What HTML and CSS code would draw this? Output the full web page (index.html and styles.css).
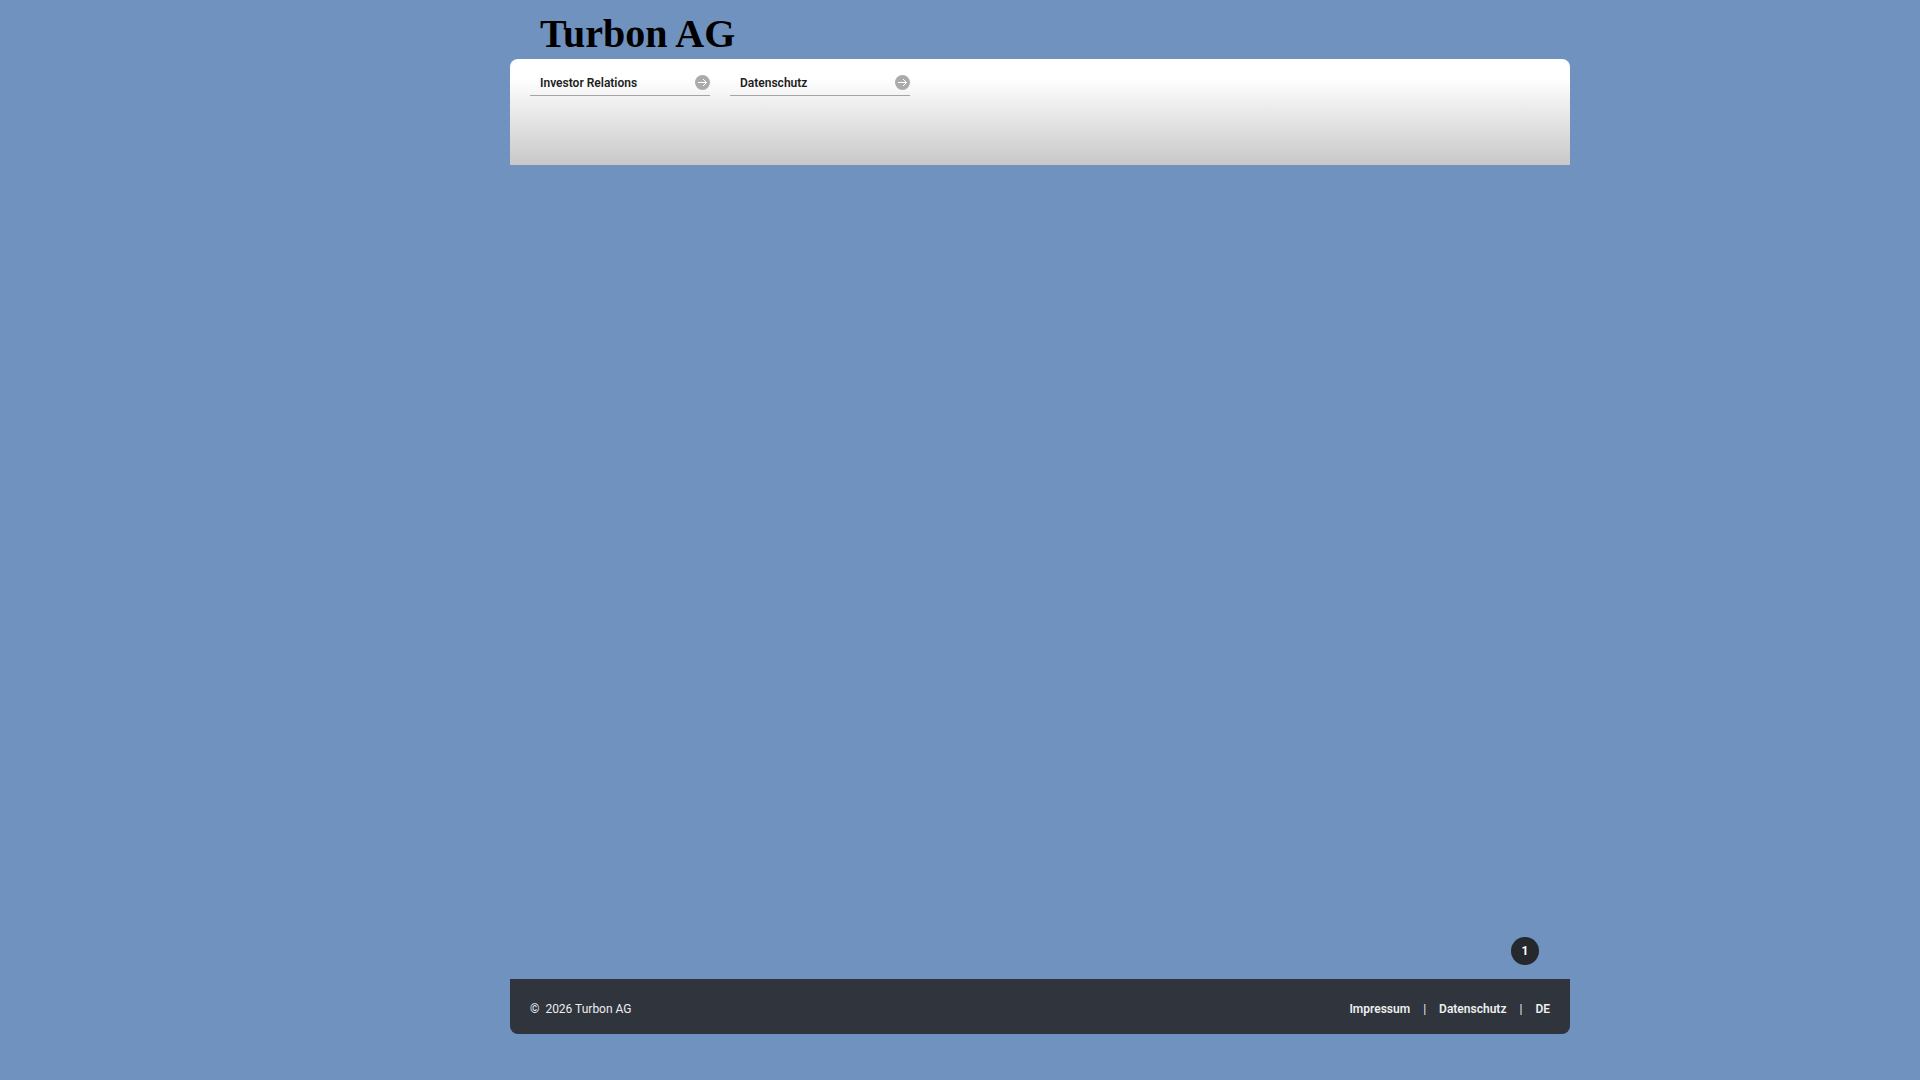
FILE: index.html
```html
<!DOCTYPE html>
<html lang="de">
<head>
<meta charset="utf-8">
<meta name="viewport" content="width=device-width, initial-scale=1">
<title>Turbon AG</title>
<link rel="stylesheet" href="styles.css">
</head>
<body>
<div class="page">
  <header>
    <a class="logo" href="#">Turbon AG</a>
    <nav class="menu" aria-label="Hauptmenü">
      <a class="menu-item" href="#">Investor Relations
        <svg class="arrow" viewBox="0 0 15 15" aria-hidden="true"><circle cx="7.5" cy="7.5" r="7.5"/><path d="M3 7.5h8.5M8 4l3.5 3.5L8 11"/></svg>
      </a>
      <a class="menu-item" href="#">Datenschutz
        <svg class="arrow" viewBox="0 0 15 15" aria-hidden="true"><circle cx="7.5" cy="7.5" r="7.5"/><path d="M3 7.5h8.5M8 4l3.5 3.5L8 11"/></svg>
      </a>
    </nav>
  </header>
  <main class="stage">
    <button class="slide" type="button">1</button>
  </main>
  <footer class="footer">
    <span>©&nbsp; 2026 Turbon AG</span>
    <nav class="links" aria-label="Fußzeile">
      <a href="#">Impressum</a><span>|</span><a href="#">Datenschutz</a><span>|</span><a href="#">DE</a>
    </nav>
  </footer>
</div>
</body>
</html>
```
FILE: styles.css
```css
* { box-sizing: border-box; }
body {
  margin: 0;
  padding-left: 160px;
  background: #6f92bf;
  color: #1c1e21;
  font: 12px/16px Roboto, "Liberation Sans", sans-serif;
}
a { color: inherit; text-decoration: none; }
.page {
  display: flex;
  flex-direction: column;
  max-width: 1060px;
  min-height: 100vh;
  margin: 0 auto;
  padding: 11px 0 46px;
}
.logo {
  display: block;
  padding: 0 0 2px 30px;
  color: #000;
  font: bold 40px/46px "Liberation Serif", serif;
}
.menu {
  display: flex;
  flex-wrap: wrap;
  align-items: flex-start;
  gap: 20px;
  min-height: 106px;
  padding: 14px 20px;
  border-radius: 8px 8px 0 0;
  background: linear-gradient(#fff 18%, #c8c8c8);
}
.menu-item {
  display: flex;
  justify-content: space-between;
  align-items: flex-start;
  width: 180px;
  padding: 2px 0 4px 10px;
  border-bottom: 1px solid #a5a5a5;
  font-weight: 600;
}
.arrow {
  width: 15px;
  height: 15px;
  fill: #aaa;
}
.arrow path { fill: none; stroke: #fff; }
.stage {
  display: flex;
  flex: 1;
  justify-content: flex-end;
  align-items: flex-end;
  padding: 14px 31px;
}
.slide {
  width: 28px;
  height: 28px;
  padding: 0;
  border: 0;
  border-radius: 50%;
  background: #25282d;
  color: #fff;
  font: inherit;
  font-weight: 700;
}
.footer {
  display: flex;
  justify-content: space-between;
  align-items: center;
  min-height: 55px;
  padding: 4px 20px 0;
  border-radius: 0 0 8px 8px;
  background: #2f343d;
  color: #eee;
}
.links { display: flex; gap: 13px; }
.links a { font-weight: 600; }
```
